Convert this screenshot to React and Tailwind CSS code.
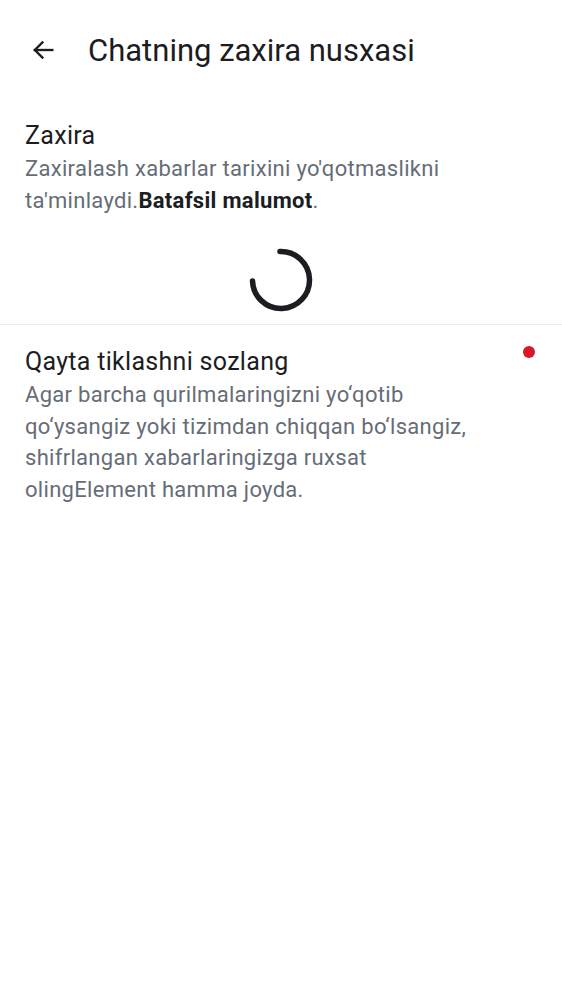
export default function App() {
  return (
    <div className="w-[562px] h-[1000px] bg-white" style={{ fontFamily: 'Roboto, "Noto Sans", sans-serif' }}>
      <div className="flex items-center h-[100px] pl-[29px]">
        <svg width="28" height="28" viewBox="0 0 24 24" fill="none" stroke="#1b1d22" strokeWidth="2" strokeLinecap="square" strokeLinejoin="miter">
          <path d="M20 12H5" />
          <path d="M11.5 5.5L5 12l6.5 6.5" />
        </svg>
        <h1 className="ml-[31px] text-[31px] text-[#1b1d22] font-normal leading-none">Chatning zaxira nusxasi</h1>
      </div>
      <div className="px-[25px] pt-[20px]">
        <div className="text-[25px] leading-[32px] tracking-[0.3px] text-[#1b1d22]">Zaxira</div>
        <div className="mt-[1px] text-[22px] leading-[32px] tracking-[0.3px] text-[#656d77]">
          Zaxiralash xabarlar tarixini yo'qotmaslikni ta'minlaydi.<span className="font-bold text-[#1b1d22]">Batafsil malumot</span>.
        </div>
      </div>
      <div className="flex justify-center pt-[31px] pb-[12px]">
        <svg width="64" height="64" viewBox="0 0 64 64">
          <circle cx="32" cy="32" r="28.5" fill="none" stroke="#1b1d22" strokeWidth="5.5" strokeLinecap="round" strokeDasharray="134 300" transform="rotate(-92 32 32)" />
        </svg>
      </div>
      <div className="h-px bg-[#e8ebef]" />
      <div className="relative px-[25px] pt-[21px]">
        <div className="text-[25px] leading-[32px] tracking-[0.3px] text-[#1b1d22]">Qayta tiklashni sozlang</div>
        <div className="mt-[1px] text-[22px] leading-[31.5px] tracking-[0.3px] text-[#656d77] max-w-[475px]">
          Agar barcha qurilmalaringizni yo‘qotib qo‘ysangiz yoki tizimdan chiqqan bo‘lsangiz, shifrlangan xabarlaringizga ruxsat olingElement hamma joyda.
        </div>
        <div className="absolute right-[27px] top-[21px] w-[12px] h-[12px] rounded-full bg-[#d51928]" />
      </div>
    </div>
  );
}
